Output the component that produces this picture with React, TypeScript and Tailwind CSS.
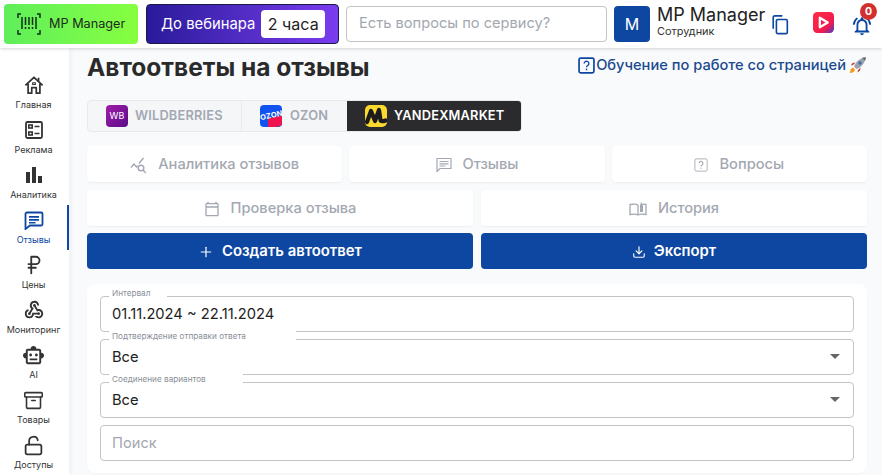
import { Plus, Download, RussianRuble, Archive, LockOpen } from "lucide-react";
import {
  MdOutlineWebhook,
  MdOutlineSmartToy,
  MdOutlineNotificationsActive,
  MdOutlineCalendarToday,
  MdArrowDropDown,
  MdBarChart,
} from "react-icons/md";

function HomeIcon() {
  return (
    <svg width="20" height="20" viewBox="0 0 22 22" fill="none" stroke="#333" strokeWidth="1.900" strokeLinejoin="round">
      <path d="M1.500 11.500L11 2.500l9.500 9M4.500 9.500V20h4v-6h5v6h4V9.500" />
      <path d="M16 3v4" />
      <path d="M9.500 8.500h3v2h-3z" strokeWidth="1.200" />
    </svg>
  );
}

function AdsIcon() {
  return (
    <svg width="20" height="20" viewBox="0 0 20 20" fill="none" stroke="#333" strokeWidth="1.6">
      <rect x="2" y="2" width="16" height="16" rx="1.500" strokeWidth="1.800" />
      <rect x="4.800" y="5" width="3.400" height="3" />
      <rect x="4.800" y="12" width="3.400" height="3" />
      <path d="M10.500 6.500h5M10.500 13.500h5" />
    </svg>
  );
}

function ReviewsIcon() {
  return (
    <svg width="20" height="20" viewBox="0 0 20 20">
      <path d="M3 2.500h14a1.500 1.500 0 0 1 1.500 1.500v10a1.500 1.500 0 0 1-1.500 1.500H6L1.500 19V4A1.500 1.500 0 0 1 3 2.500z" fill="none" stroke="#0d47a1" strokeWidth="1.800" />
      <path d="M5 6h10v1.700H5zM5 9h10v1.700H5zM5 12h6.500v1.400H5z" fill="#0d47a1" />
    </svg>
  );
}

function ChatLines() {
  return (
    <svg width="16" height="16" viewBox="0 0 16 16" fill="none" stroke="#a3a8b2" strokeWidth="1.200">
      <path d="M1 1.500h14v10H4L1 14.500z" strokeLinejoin="round" />
      <path d="M3.500 4.500h9M3.500 6.800h9M3.500 9h6" />
    </svg>
  );
}

function BookPen() {
  return (
    <svg width="18" height="16" viewBox="0 0 18 16" fill="none" stroke="#a3a8b2" strokeWidth="1.300">
      <path d="M9 4C7.500 3 4 3 1 3.500v10c3-.5 6.500-.5 8 .5 1.500-1 5-1 8-.5v-10c-1-.2-2-.3-3-.3" />
      <path d="M9 4v10" />
      <path d="M11 11V4l1.500-3L14 4v7z" fill="#a3a8b2" stroke="none" />
    </svg>
  );
}

function CopyIcon() {
  return (
    <svg width="17" height="20" viewBox="0 0 18 22" fill="none" stroke="#0d47a1" strokeWidth="1.800">
      <path d="M1 15V2.500A1.500 1.500 0 0 1 2.500 1H11" />
      <rect x="4.500" y="5" width="12" height="15.500" rx="1.500" />
    </svg>
  );
}

function HelpSquare({ size, color, width = 1.6 }: { size: number; color: string; width?: number }) {
  return (
    <svg width={size} height={size} viewBox="0 0 16 16" fill="none">
      <rect x="1" y="1" width="14" height="14" rx="1.500" stroke={color} strokeWidth={width} />
      <path d="M5.800 6.100a2.200 2.200 0 1 1 3.400 1.900c-.8.500-1.200.9-1.200 1.700" stroke={color} strokeWidth="1.300" />
      <path d="M7.300 11h1.400v1.400H7.300z" fill={color} />
    </svg>
  );
}

function AnalyticsIcon() {
  return (
    <svg width="17" height="17" viewBox="0 0 17 17" fill="none" stroke="#a3a8b2" strokeWidth="1.400">
      <path d="M1 10.500L4 7l2.500 3 1.200-1.400M9 6.500L13.500 1" />
      <circle cx="11" cy="11" r="2.800" />
      <path d="M13 13l2.800 3" />
    </svg>
  );
}

function BarcodeLogo() {
  return (
    <svg width="26" height="22" viewBox="0 0 26 22" fill="none" stroke="#11301a" strokeWidth="1.500">
      <path d="M5 1H2v4M21 1h3v4M5 21H2v-4M21 21h3v-4" />
      <path d="M6 4v12M9.500 4v8M13 4v8M16.500 4v8M20 4v12" />
      <path d="M9.500 14v2M13 14v2M16.500 14v2" />
    </svg>
  );
}

function VideoLogo() {
  return (
    <svg width="21" height="21" viewBox="0 0 20 20">
      <defs>
        <linearGradient id="vk" x1="0" y1="0" x2="1" y2="1">
          <stop offset="0" stopColor="#ff2e43" />
          <stop offset="0.7" stopColor="#f01a4e" />
          <stop offset="1" stopColor="#3b3fd8" />
        </linearGradient>
      </defs>
      <rect width="20" height="20" rx="4" fill="url(#vk)" />
      <path d="M6.500 5.500l7.500 4.500-7.500 4.500z" fill="none" stroke="#fff" strokeWidth="2.200" strokeLinejoin="round" />
    </svg>
  );
}

function Rocket() {
  return (
    <svg width="18" height="18" viewBox="0 0 18 18">
      <path d="M1 17c0-3 1-5 3-5.500l2 2C5.500 15.500 4 17 1 17z" fill="#f59b1c" />
      <path d="M4 9L1.800 9.500 3.500 7l3-.5zM9 14l-.5 2.500L11 14.500l.5-3z" fill="#c43b2e" />
      <path d="M5 10.500C7 5.500 11 2 16.800 1.200 16 7 12.500 11 7.500 13z" fill="#9aa3ad" />
      <path d="M13 1.800c1.500-.4 2.700-.5 3.800-.6-.1 1.100-.3 2.300-.7 3.600z" fill="#5b6670" />
      <circle cx="11" cy="7" r="1.700" fill="#3e6fa8" />
    </svg>
  );
}

const navItems = [
  { label: "Главная", icon: <HomeIcon /> },
  { label: "Реклама", icon: <AdsIcon /> },
  { label: "Аналитика", icon: <MdBarChart size={24} color="#333" /> },
  { label: "Отзывы", icon: <ReviewsIcon />, active: true },
  { label: "Цены", icon: <RussianRuble size={22} color="#333" strokeWidth={2} /> },
  { label: "Мониторинг", icon: <MdOutlineWebhook size={22} color="#333" /> },
  { label: "AI", icon: <MdOutlineSmartToy size={23} color="#333" /> },
  { label: "Товары", icon: <Archive size={21} color="#333" strokeWidth={1.8} /> },
  { label: "Доступы", icon: <LockOpen size={21} color="#333" strokeWidth={2} /> },
];

function Sidebar() {
  return (
    <aside className="w-[69px] shrink-0 bg-white shadow-[2px_0_4px_rgba(0,0,0,0.05)] pt-[22px] z-10">
      {navItems.map((item) => (
        <div
          key={item.label}
          className={`h-[45px] flex flex-col items-center pt-[3px] border-r-2 ${
            item.active ? "border-[#0d47a1] text-[#0d47a1]" : "border-transparent text-[#333]"
          }`}
        >
          <div className="h-[24px] mb-[2px] flex items-center justify-center">{item.icon}</div>
          <span className="text-[9px] leading-[12px] whitespace-nowrap">{item.label}</span>
        </div>
      ))}
    </aside>
  );
}

function Header() {
  return (
    <header className="h-[48px] shrink-0 bg-white shadow-[0_1px_3px_rgba(0,0,0,0.16)] flex items-center pl-1 z-20 relative">
      <div className="w-[134px] h-[40px] rounded bg-gradient-to-r from-[#5fee5a] to-[#86ff3f] flex items-center pl-[12px] gap-[7px] text-[12.700px] text-[#1c2b20]">
        <BarcodeLogo />
        MP Manager
      </div>
      <div className="ml-2 w-[193px] h-[40px] rounded border border-[#1a1a4a] bg-gradient-to-r from-[#2a1a9a] to-[#7a3cf0] flex items-center pl-[14px] gap-[6px] text-white text-[14.800px]">
        До вебинара
        <span className="bg-white text-[#222] rounded h-[28px] w-[64px] flex items-center justify-center text-[16px]">
          2 часа
        </span>
      </div>
      <div className="ml-[7px] w-[261px] h-[36px] rounded border border-[#c4c4c4] flex items-center pl-[12px] text-[14.650px] text-[#a3a8b0]">
        Есть вопросы по сервису?
      </div>
      <div className="ml-[7px] w-[36px] h-[36px] rounded bg-[#0d47a1] text-white flex items-center justify-center text-[16px]">
        M
      </div>
      <div className="ml-[7px] w-[115px] flex flex-col self-start pt-[5px]">
        <span className="text-[18px] leading-[20px] text-[#222] whitespace-nowrap">MP Manager</span>
        <span className="text-[10.900px] leading-[13px] text-[#333]">Сотрудник</span>
      </div>
      <div className="mt-[2px]">
        <CopyIcon />
      </div>
      <div className="ml-[24px] mb-[3px]">
        <VideoLogo />
      </div>
      <div className="relative ml-[17px] mt-[4px]">
        <MdOutlineNotificationsActive size={22} color="#0d47a1" />
        <span className="absolute -top-[12px] left-[9px] w-[17px] h-[17px] rounded-full bg-[#d32f2f] text-white text-[10.500px] font-bold flex items-center justify-center">
          0
        </span>
      </div>
    </header>
  );
}

function MarketTabs() {
  return (
    <div className="mt-[15px] flex w-[435px] h-[32px] rounded border border-[#e7e9ec] bg-[#f4f6f8] text-[12.800px] font-semibold tracking-[0.2px] text-[#a3a8b2] overflow-hidden">
      <div className="w-[154px] flex items-center pl-[18px] gap-[7px] border-r border-[#e7e9ec]">
        <span className="w-[22px] h-[22px] rounded bg-gradient-to-br from-[#a31aa8] to-[#5a0a8a] text-white text-[9px] font-normal flex items-center justify-center">
          WB
        </span>
        WILDBERRIES
      </div>
      <div className="w-[105px] flex items-center pl-[18px] gap-[8px]">
        <span className="relative w-[22px] h-[22px] rounded bg-[#1252f0] overflow-hidden flex items-center justify-center">
          <span className="absolute right-0 bottom-0 w-[14px] h-[10px] bg-[#f0134d] -skew-y-12" />
          <span className="relative text-white text-[7.500px] font-bold -rotate-12">OZON</span>
        </span>
        OZON
      </div>
      <div className="flex-1 bg-[#2b2b2d] text-white flex items-center pl-[18px] gap-[7px]">
        <span className="w-[22px] h-[22px] rounded-[5px] bg-[#fcd92d] flex items-center justify-center overflow-hidden">
          <svg width="22" height="18" viewBox="0 0 22 18" fill="none" stroke="#1c1c1c" strokeWidth="4.200" strokeLinecap="round" strokeLinejoin="round">
            <path d="M2 15l4-11 4 10 4-11 1.500 10c.3 1.500 2.500 1.500 5 .5" />
          </svg>
        </span>
        YANDEXMARKET
      </div>
    </div>
  );
}

function GhostTab({ icon, label }: { icon: React.ReactNode; label: string }) {
  return (
    <div className="h-[36px] pt-[2px] rounded bg-white shadow-[0_1px_2px_rgba(0,0,0,0.05)] flex items-center justify-center gap-[11px] text-[14.650px] font-medium text-[#a3a8b2]">
      {icon}
      {label}
    </div>
  );
}

function PrimaryButton({ icon, label }: { icon: React.ReactNode; label: string }) {
  return (
    <div className="h-[36px] pt-[1px] rounded bg-[#0d47a1] flex items-center justify-center gap-[8px] text-[14.850px] font-semibold text-white">
      {icon}
      {label}
    </div>
  );
}

function Field({
  label,
  value,
  select,
  notch = "",
}: {
  label?: string;
  value: string;
  select?: boolean;
  notch?: string;
}) {
  return (
    <div className="relative h-[36px] rounded border border-[#c4c4c4] flex items-center pl-[11px] bg-white">
      {label && (
        <span className={`absolute -top-[9px] left-[8px] bg-white pl-[3px] text-[8.200px] leading-[10px] text-[#8a8f98] ${notch}`}>
          {label}
        </span>
      )}
      <span className={`text-[14.700px] ${label ? "text-[#222]" : "text-[#a3a8b0]"}`}>{value}</span>
      {select && (
        <MdArrowDropDown size={24} color="#666" className="absolute right-[6px] top-[4px]" />
      )}
    </div>
  );
}

export default function App() {
  return (
    <div className="[font-family:Inter,sans-serif] w-[882px] h-[475px] overflow-hidden flex flex-col bg-[#f8fafc]">
      <Header />
      <div className="flex flex-1 min-h-0">
        <Sidebar />
        <main className="flex-1 pl-[18px] pr-[15px] min-w-0">
          <div className="flex items-start justify-between h-[37px]">
            <h1 className="text-[24.500px] leading-[38px] font-bold text-[#2a2a2a]">Автоответы на отзывы</h1>
            <div className="flex items-center pt-[8px] text-[14.650px] leading-[18px] font-medium text-[#1c4a8e]">
              <HelpSquare size={17} color="#0d47a1" />
              <span className="ml-[1px]">Обучение по работе со страницей</span>
              <span className="ml-[3px]">
                <Rocket />
              </span>
            </div>
          </div>
          <MarketTabs />
          <div className="mt-[14px] grid grid-cols-3 gap-[7px]">
            <GhostTab icon={<AnalyticsIcon />} label="Аналитика отзывов" />
            <GhostTab icon={<ChatLines />} label="Отзывы" />
            <GhostTab icon={<HelpSquare size={14} color="#a3a8b2" width={1} />} label="Вопросы" />
          </div>
          <div className="mt-[8px] grid grid-cols-2 gap-x-[8px] gap-y-[7px]">
            <GhostTab icon={<MdOutlineCalendarToday size={16} color="#a3a8b2" />} label="Проверка отзыва" />
            <GhostTab icon={<BookPen />} label="История" />
            <PrimaryButton icon={<Plus size={16} strokeWidth={1.8} />} label="Создать автоответ" />
            <PrimaryButton icon={<Download size={14} strokeWidth={2} />} label="Экспорт" />
          </div>
          <div className="mt-[15px] rounded-lg bg-white px-[13px] pt-[12px] h-[189px] flex flex-col gap-[7px] shadow-[0_1px_2px_rgba(0,0,0,0.03)]">
            <Field label="Интервал" value="01.11.2024 ~ 22.11.2024" notch="pr-[17px]" />
            <Field label="Подтверждение отправки ответа" value="Все" select notch="pr-[50px]" />
            <Field label="Соединение вариантов" value="Все" select notch="pr-[37px]" />
            <Field value="Поиск" />
          </div>
        </main>
      </div>
    </div>
  );
}
